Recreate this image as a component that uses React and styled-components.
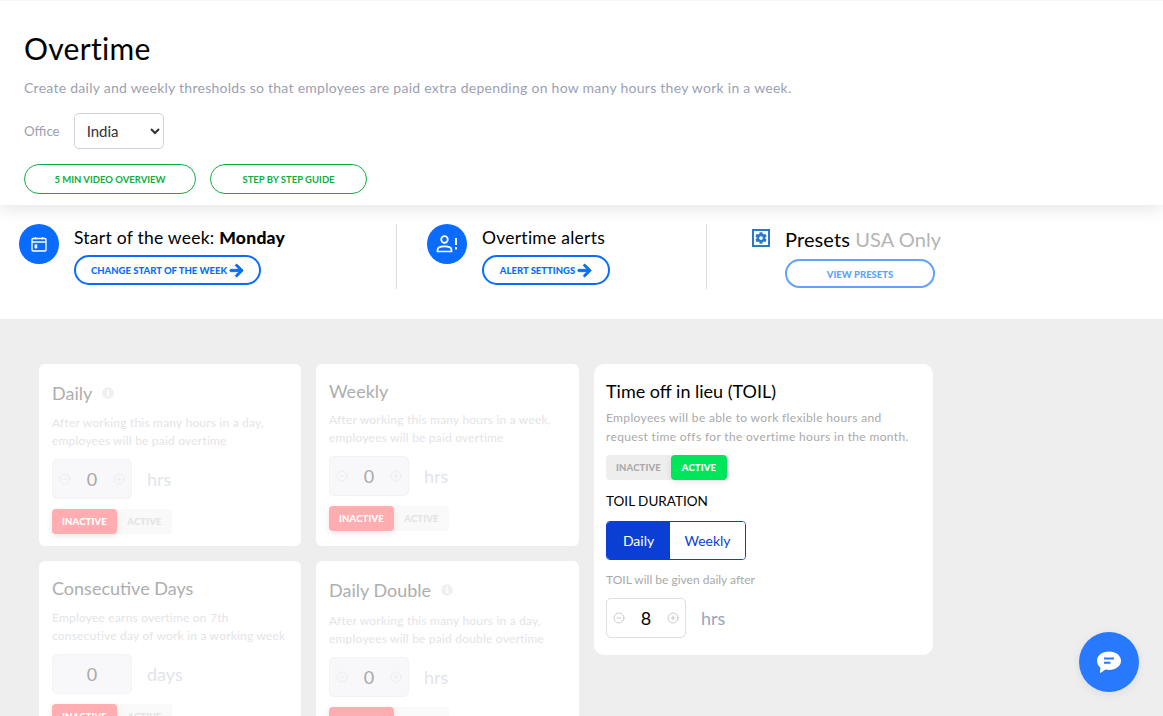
import React from 'react';
import styled, { createGlobalStyle } from 'styled-components';
import { FaArrowRight, FaCog, FaInfoCircle } from 'react-icons/fa';
import { CircleMinus, CirclePlus } from 'lucide-react';

const GlobalStyle = createGlobalStyle`
  html, body {
    margin: 0;
    height: 716px;
    overflow: hidden;
    background: #eee;
    font-family: Lato, "Open Sans", sans-serif;
    color: #000;
  }
  * { box-sizing: border-box; }
`;

const Header = styled.header`
  position: relative;
  z-index: 1;
  height: 205px;
  padding: 30px 24px 0;
  background: #fff;
  box-shadow: 0 4px 16px rgba(0, 0, 0, 0.1);
  border-top: 1px solid #f6f6f6;
`;
const Title = styled.h1`
  margin: 0;
  font-size: 30px;
  line-height: 34px;
  font-weight: 400;
  letter-spacing: 0.3px;
`;
const Lead = styled.p`
  margin: 13px 0 0;
  font-size: 14px;
  line-height: 20px;
  color: #9ba1b2;
  letter-spacing: 0.265px;
`;
const OfficeRow = styled.div`
  display: flex;
  align-items: center;
  gap: 14px;
  margin-top: 15px;
  font-size: 13.3px;
  color: #9ba1b2;
`;
const OfficeSelect = styled.select`
  width: 90px;
  height: 36px;
  padding: 0 8px;
  border: 1px solid #ced2dc;
  border-radius: 5px;
  background: #fff;
  color: #333;
  font-family: inherit;
  font-size: 15px;
`;
const GuideRow = styled.div`
  display: flex;
  gap: 14px;
  margin-top: 15px;
`;
const GuideButton = styled.button`
  width: ${(p) => p.$width}px;
  height: 30px;
  padding: 0;
  border: 1px solid #0fae3e;
  border-radius: 15px;
  background: #fff;
  color: #0fae3e;
  font-family: inherit;
  font-size: 9.5px;
  font-weight: 700;
  text-transform: uppercase;
`;

const InfoBar = styled.section`
  display: flex;
  height: 114px;
  padding: 19px 0 0 19px;
  background: #fff;
`;
const InfoItem = styled.div`
  display: flex;
  align-items: flex-start;
  gap: 15px;
  width: ${(p) => p.$width}px;
  height: 65px;
  border-right: ${(p) => (p.$divider ? '1px solid #dedede' : 'none')};
  margin-right: ${(p) => p.$gap}px;
`;
const IconCircle = styled.div`
  flex: none;
  width: 40px;
  height: 40px;
  border-radius: 50%;
  background: #0a6cff;
  display: flex;
  align-items: center;
  justify-content: center;
`;
const ItemTitle = styled.div`
  font-size: 17.5px;
  line-height: 22px;
  margin-top: 3px;
  letter-spacing: 0.25px;
  b { font-weight: 900; }
`;
const OutlineButton = styled.button`
  display: flex;
  align-items: center;
  justify-content: center;
  gap: 2px;
  width: ${(p) => p.$width}px;
  height: 30px;
  margin-top: 6px;
  padding: 1px 0 0;
  border: 2px solid #0a6cff;
  border-radius: 15px;
  background: #fff;
  color: #0a6cff;
  font-family: inherit;
  font-size: 9.5px;
  font-weight: 900;
  text-transform: uppercase;
  svg {
    font-size: 15px;
    stroke: currentColor;
    stroke-width: 30;
  }
`;
const PresetIcon = styled.div`
  flex: none;
  width: 18px;
  height: 18px;
  margin-top: 5px;
  border: 2px solid #2a78cc;
  color: #2a78cc;
  display: flex;
  align-items: center;
  justify-content: center;
  font-size: 12px;
`;
const PresetTitle = styled.div`
  font-size: 20px;
  line-height: 24px;
  margin-top: 3px;
  white-space: nowrap;
  letter-spacing: 0.1px;
  span { color: #b5b5b5; }
`;
const PresetButton = styled(OutlineButton)`
  height: 29px;
  margin-top: 8px;
  border-color: #62a2fb;
  color: #62a2fb;
`;

const Board = styled.main`
  display: grid;
  grid-template-columns: 262px 263px 339px;
  gap: 15px;
  padding: 45px 0 0 39px;
`;
const Column = styled.div`
  display: flex;
  flex-direction: column;
  gap: 15px;
`;
const Card = styled.div`
  background: #fff;
  border-radius: 6px;
  padding: ${(p) => p.$top}px 13px 12px;
  min-height: 182px;
`;
const CardHead = styled.div`
  display: flex;
  align-items: center;
  gap: 10px;
  height: 24px;
  font-size: 18px;
  color: #aeaeae;
  svg { color: #f0f0f0; font-size: 12px; }
`;
const CardText = styled.p`
  margin: ${(p) => p.$top}px 0 0;
  font-size: 12px;
  line-height: 18px;
  color: #e4e4e6;
  letter-spacing: 0.2px;
  white-space: nowrap;
`;
const StepperRow = styled.div`
  display: flex;
  align-items: center;
  gap: 15px;
  margin-top: 9px;
`;
const Stepper = styled.div`
  display: flex;
  align-items: center;
  justify-content: space-between;
  width: 80px;
  height: 40px;
  padding: 0 6px;
  border-radius: 5px;
  font-size: 18px;
  background: ${(p) => (p.$live ? '#fff' : '#f8f8fa')};
  border: 1px solid ${(p) => (p.$live ? '#dfdfe3' : '#f3f3f6')};
  color: ${(p) => (p.$live ? '#000' : '#a9a9a9')};
  svg { color: ${(p) => (p.$live ? '#a9a9a9' : '#e4e4e8')}; }
  span { flex: 1; text-align: center; }
`;
const Unit = styled.span`
  font-size: 18px;
  color: ${(p) => (p.$live ? '#9aa4bd' : '#e2e4ec')};
`;
const Toggle = styled.div`
  display: flex;
  width: fit-content;
  height: 25px;
  margin-top: ${(p) => (p.$live ? 9 : 10)}px;
  border-radius: 4px;
  background: ${(p) => (p.$live ? '#eee' : '#f9f9f9')};
`;
const ToggleSide = styled.div`
  width: ${(p) => p.$width}px;
  border-radius: 4px;
  display: flex;
  align-items: center;
  justify-content: center;
  font-size: 9.5px;
  font-weight: 900;
  letter-spacing: 0.15px;
  text-transform: uppercase;
  color: ${(p) => p.$color};
  background: ${(p) => p.$bg || 'transparent'};
  box-shadow: ${(p) => (p.$bg ? '0 2px 6px rgba(0, 0, 0, 0.1)' : 'none')};
`;

const LiveCard = styled.div`
  height: 291px;
  padding: 15px 12px 0;
  background: #fff;
  border-radius: 10px;
`;
const LiveHead = styled.h2`
  margin: 0;
  font-size: 18px;
  line-height: 24px;
  font-weight: 400;
`;
const LiveText = styled.p`
  margin: 5px 0 0;
  font-size: 12px;
  line-height: 19px;
  color: #a9a9a9;
  letter-spacing: 0.35px;
  white-space: nowrap;
`;
const LiveLabel = styled.div`
  margin-top: 11px;
  font-size: 13.5px;
  line-height: 20px;
`;
const Segments = styled.div`
  display: flex;
  width: 140px;
  height: 39px;
  margin-top: 10px;
  border: 1px solid #0b3fd4;
  border-radius: 4px;
  overflow: hidden;
`;
const Segment = styled.div`
  display: flex;
  align-items: center;
  justify-content: center;
  width: ${(p) => p.$width}px;
  font-size: 14px;
  background: ${(p) => (p.$on ? '#0b3fd4' : '#fff')};
  color: ${(p) => (p.$on ? '#fff' : '#0b3fd4')};
`;
const Hint = styled.div`
  margin-top: 11px;
  font-size: 12px;
  line-height: 18px;
  color: #a9a9a9;
`;

const ChatButton = styled.button`
  position: fixed;
  left: 1079px;
  top: 632px;
  z-index: 2;
  width: 60px;
  height: 60px;
  padding: 0;
  border: 0;
  border-radius: 50%;
  background: #2979ff;
  box-shadow: 0 2px 10px rgba(0, 0, 0, 0.08);
  display: flex;
  align-items: center;
  justify-content: center;
`;

const CalendarIcon = () => (
  <svg width="16" height="16" viewBox="0 0 16 16" fill="none" stroke="#fff" strokeWidth="1.3">
    <rect x="1" y="2.5" width="14" height="12.5" rx="1" />
    <path d="M1 6h14M4.5 1v2.5M11.5 1v2.5" />
    <rect x="3.6" y="8.4" width="2.6" height="4" fill="#fff" stroke="none" />
  </svg>
);

const AlertUserIcon = () => (
  <svg width="22" height="20" viewBox="0 0 22 20" fill="none" stroke="#fff" strokeWidth="1.7">
    <circle cx="8.5" cy="5.5" r="3.3" />
    <path d="M1.5 17.5v-1.6c0-2 2.4-3.6 7-3.6s7 1.6 7 3.6v1.6z" />
    <path d="M20 4v7M20 13v2.4" strokeWidth="2" />
  </svg>
);

const ChatIcon = () => (
  <svg width="24" height="24" viewBox="0 0 24 24">
    <path fill="#fff" d="M12 1.5c6.6 0 12 3.9 12 9.2s-5.4 9.2-12 9.2c-1.2 0-2.4-.1-3.5-.4L3.8 22.800c-.5.3-1 0-.9-.6l.5-4.700C1.300 15.900 0 13.500 0 10.700 0 5.400 5.400 1.500 12 1.500z" />
    <path stroke="#2979ff" strokeWidth="2" d="M7 8.600h10M7 12.800h6.500" />
  </svg>
);

const StepperField = ({ value, live, plain }) => (
  <Stepper $live={live}>
    {!plain && <CircleMinus size={12} strokeWidth={1.2} />}
    <span>{value}</span>
    {!plain && <CirclePlus size={12} strokeWidth={1.2} />}
  </Stepper>
);

const InactiveToggle = () => (
  <Toggle>
    <ToggleSide $width={65} $bg="#ffadb1" $color="#fff">Inactive</ToggleSide>
    <ToggleSide $width={55} $color="#e3e3e3">Active</ToggleSide>
  </Toggle>
);

const RuleCard = ({ title, info, top, textTop, lines, value, unit, plain }) => (
  <Card $top={top}>
    <CardHead>
      {title}
      {info && <FaInfoCircle />}
    </CardHead>
    <CardText $top={textTop}>
      {lines[0]}
      <br />
      {lines[1]}
    </CardText>
    <StepperRow>
      <StepperField value={value} plain={plain} />
      <Unit>{unit}</Unit>
    </StepperRow>
    <InactiveToggle />
  </Card>
);

export default function App() {
  return (
    <>
      <GlobalStyle />
      <Header>
        <Title>Overtime</Title>
        <Lead>Create daily and weekly thresholds so that employees are paid extra depending on how many hours they work in a week.</Lead>
        <OfficeRow>
          Office
          <OfficeSelect defaultValue="India">
            <option>India</option>
            <option>USA</option>
          </OfficeSelect>
        </OfficeRow>
        <GuideRow>
          <GuideButton $width={172}>5 min video overview</GuideButton>
          <GuideButton $width={157}>Step by step guide</GuideButton>
        </GuideRow>
      </Header>

      <InfoBar>
        <InfoItem $width={378} $divider $gap={30}>
          <IconCircle><CalendarIcon /></IconCircle>
          <div>
            <ItemTitle>Start of the week: <b>Monday</b></ItemTitle>
            <OutlineButton $width={187}>Change start of the week<FaArrowRight /></OutlineButton>
          </div>
        </InfoItem>
        <InfoItem $width={280} $divider $gap={45}>
          <IconCircle><AlertUserIcon /></IconCircle>
          <div>
            <ItemTitle>Overtime alerts</ItemTitle>
            <OutlineButton $width={128}>Alert settings<FaArrowRight /></OutlineButton>
          </div>
        </InfoItem>
        <InfoItem $width={190} $gap={0}>
          <PresetIcon><FaCog /></PresetIcon>
          <div>
            <PresetTitle>Presets <span>USA Only</span></PresetTitle>
            <PresetButton $width={150}>View presets</PresetButton>
          </div>
        </InfoItem>
      </InfoBar>

      <Board>
        <Column>
          <RuleCard
            title="Daily"
            info
            top={17}
            textTop={9}
            lines={['After working this many hours in a day,', 'employees will be paid overtime']}
            value="0"
            unit="hrs"
          />
          <RuleCard
            title="Consecutive Days"
            top={15}
            textTop={9}
            lines={['Employee earns overtime on 7th', 'consecutive day of work in a working week']}
            value="0"
            unit="days"
            plain
          />
        </Column>
        <Column>
          <RuleCard
            title="Weekly"
            top={15}
            textTop={8}
            lines={['After working this many hours in a week,', 'employees will be paid overtime']}
            value="0"
            unit="hrs"
          />
          <RuleCard
            title="Daily Double"
            info
            top={17}
            textTop={10}
            lines={['After working this many hours in a day,', 'employees will be paid double overtime']}
            value="0"
            unit="hrs"
          />
        </Column>
        <LiveCard>
          <LiveHead>Time off in lieu (TOIL)</LiveHead>
          <LiveText>
            Employees will be able to work flexible hours and
            <br />
            request time offs for the overtime hours in the month.
          </LiveText>
          <Toggle $live>
            <ToggleSide $width={65} $color="#a9a9a9">Inactive</ToggleSide>
            <ToggleSide $width={56} $bg="#00e65b" $color="#fff">Active</ToggleSide>
          </Toggle>
          <LiveLabel>TOIL DURATION</LiveLabel>
          <Segments>
            <Segment $on $width={64}>Daily</Segment>
            <Segment $width={76}>Weekly</Segment>
          </Segments>
          <Hint>TOIL will be given daily after</Hint>
          <StepperRow>
            <StepperField value="8" live />
            <Unit $live>hrs</Unit>
          </StepperRow>
        </LiveCard>
      </Board>

      <ChatButton aria-label="Chat"><ChatIcon /></ChatButton>
    </>
  );
}
